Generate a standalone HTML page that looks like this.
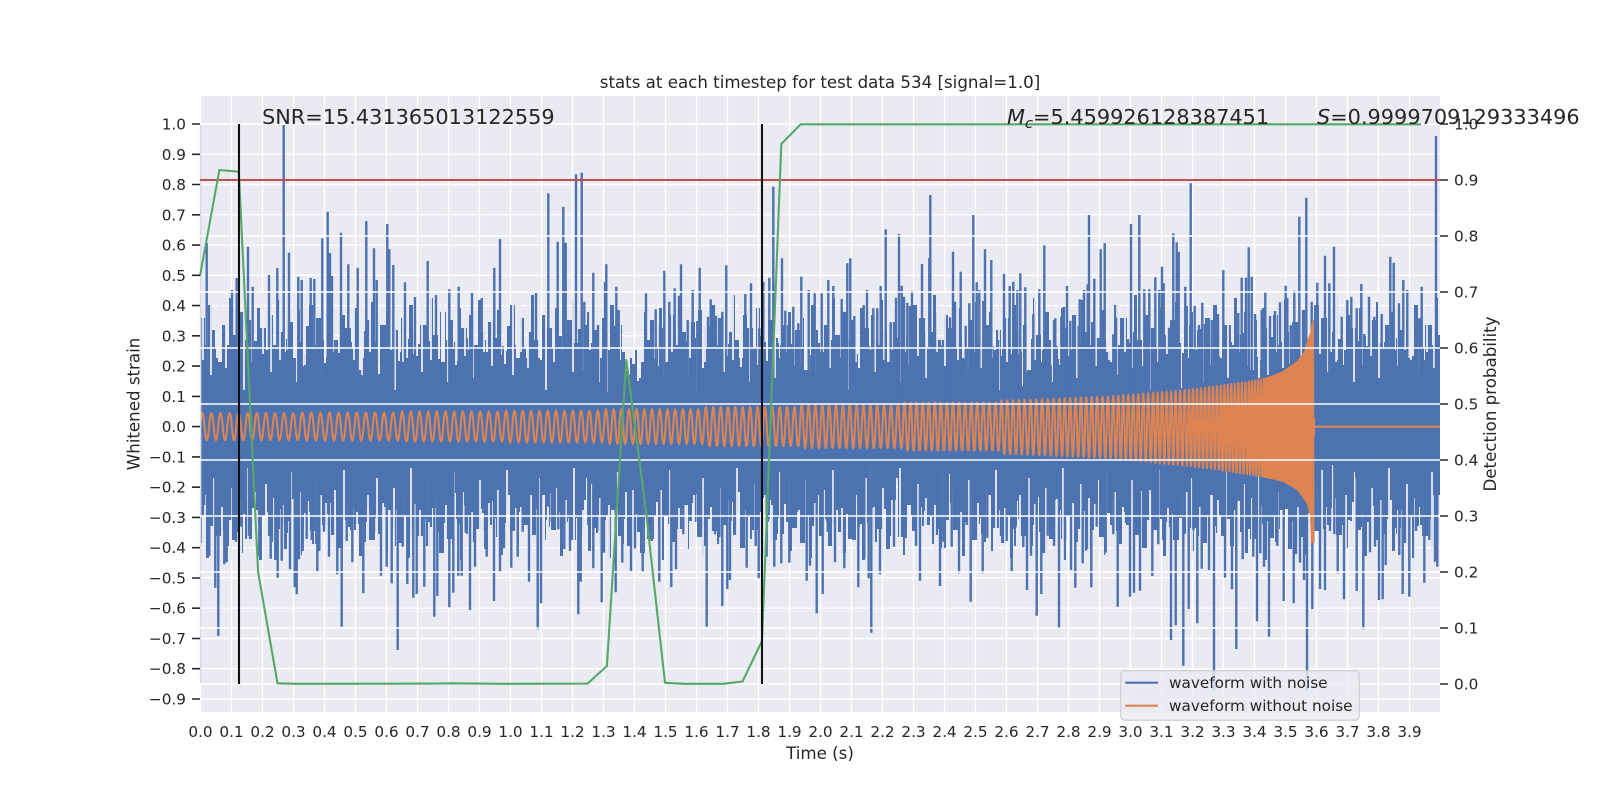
<!DOCTYPE html>
<html><head><meta charset="utf-8"><title>stats</title>
<style>html,body{margin:0;padding:0;background:#fff}svg{display:block}text{font-family:"DejaVu Sans","Liberation Sans",sans-serif;fill:#262626}</style>
</head><body>
<svg xmlns="http://www.w3.org/2000/svg" width="1600" height="800" viewBox="0 0 1600 800">
<defs><clipPath id="c"><rect x="200" y="96" width="1240" height="616"/></clipPath>
<path id="tt" fill="#4C72B0" d="M0 426V352h2V345h2V345h2V361h2V356h2V340h2V366h2V349h2V358h2V343h2V343h2V363h2V381h2V351h2V347h2V360h2V335h2V335h2V354h2V368h2V342h2V357h2V349h2V364h2V346h2V388h2V353h2V341h2V341h2V359h2V367h2V350h2V344h2V356h2V329h2V329h2V362h2V348h2V372h2V355h2V343h2V365h2V352h2V339h2V358h2V358h2V346h2V361h2V392h2V350h2V342h2V366h2V354h2V347h2V347h2V360h2V333h2V356h2V344h2V369h2V351h2V340h2V363h2V357h2V378h2V349h2V345h2V345h2V362h2V353h2V337h2V337h2V359h2V348h2V366h2V342h2V355h2V384h2V350h2V364h2V344h2V358h2V331h2V352h2V352h2V367h2V346h2V360h2V341h2V374h2V356h2V349h2V363h2V343h2V343h2V354h2V368h2V327h2V347h2V361h2V352h2V386h2V345h2V358h2V339h2V339h2V365h2V350h2V356h2V344h2V362h2V348h2V376h2V355h2V341h2V367h2V353h2V353h2V346h2V359h2V334h2V351h2V364h2V343h2V357h2V390h2V349h2V342h2V361h2V361h2V347h2V366h2V354h2V338h2V358h2V345h2V369h2V350h2V363h2V380h2V344h2V356h2V340h2V352h2V352h2V365h2V348h2V360h2V342h2V372h2V355h2V346h2V364h2V351h2V343h2V426Z"/>
<path id="tb" fill="#4C72B0" d="M0 426V507h2V498h2V498h2V521h2V512h2V491h2V526h2V503h2V516h2V495h2V495h2V530h2V470h2V509h2V501h2V519h2V540h2V540h2V506h2V527h2V493h2V514h2V502h2V523h2V497h2V466h2V508h2V492h2V492h2V518h2V528h2V504h2V496h2V512h2V536h2V536h2V522h2V500h2V478h2V510h2V494h2V525h2V507h2V533h2V515h2V515h2V499h2V520h2V462h2V505h2V493h2V526h2V511h2V501h2V501h2V517h2V544h2V513h2V497h2V529h2V506h2V490h2V523h2V514h2V474h2V503h2V498h2V498h2V521h2V508h2V538h2V538h2V516h2V502h2V527h2V495h2V511h2V468h2V505h2V524h2V496h2V515h2V542h2V507h2V507h2V528h2V499h2V518h2V492h2V476h2V512h2V503h2V522h2V494h2V494h2V509h2V529h2V546h2V501h2V519h2V507h2V464h2V498h2V515h2V535h2V535h2V525h2V504h2V512h2V497h2V521h2V502h2V472h2V510h2V492h2V527h2V508h2V508h2V499h2V517h2V539h2V506h2V523h2V495h2V514h2V460h2V503h2V493h2V519h2V519h2V500h2V526h2V511h2V534h2V515h2V498h2V530h2V504h2V522h2V480h2V496h2V513h2V491h2V507h2V507h2V525h2V501h2V518h2V494h2V478h2V510h2V499h2V523h2V505h2V495h2V426Z"/>
<path id="ct" fill="#4C72B0" d="M0 426V318h5V426h3V305h4V330h3V426h4V325h7V345h3V298h3V335h5V426h2V312h6V340h3V320h4V426h5V308h3V328h6V350h2V315h5V345h4V300h3V332h4V426h3V322h6V338h3V310h4V426h6V326h3V305h5V345h2V318h7V426h4V332h3V295h3V340h5V426h3V315h4V328h6V348h3V308h4V336h3V426h5V320h5V302h2V343h4V426h3V325h6V312h3V350h4V330h5V426h3V426Z"/>
<path id="cb" fill="#4C72B0" d="M0 426V535h4V426h3V548h5V520h3V426h4V530h6V512h3V556h3V522h5V426h2V540h6V518h3V534h4V426h5V551h3V528h6V510h2V543h5V515h4V558h3V526h4V426h3V536h6V519h3V546h4V426h6V532h3V553h5V514h2V539h7V426h4V524h3V560h3V516h5V426h3V542h4V529h6V509h3V549h4V521h3V426h5V537h5V555h2V513h4V426h3V531h6V544h3V507h4V525h5V426h3V426Z"/>
<path id="g1" fill="none" stroke="#EAEAF2" stroke-width="1.8" d="M3 360V292M11 375V292M19 352V292M26 368V292M37 358V292M44 390V292M52 362V292M63 354V292M71 372V292M80 360V292M88 350V292M97 382V292M105 365V292M114 356V292M122 378V292M133 352V292M141 366V292"/>
<path id="g2" fill="none" stroke="#EAEAF2" stroke-width="1.8" d="M5 495V560M14 478V560M22 507V560M31 488V560M40 500V560M48 468V560M57 510V560M66 484V560M74 498V560M83 505V560M91 472V560M100 492V560M109 512V560M117 480V560M126 503V560M135 490V560M144 470V560M153 508V560"/>
<path id="g3" fill="none" stroke="#EAEAF2" stroke-width="4" d="M20 362V292M95 358V292M160 370V292M40 505V560M120 495V560M190 510V560"/>
</defs>
<rect width="1600" height="800" fill="#fff"/>
<rect x="200" y="96" width="1240" height="616" fill="#EAEAF2"/>
<path fill="none" stroke="#fff" stroke-width="1.39" d="M200 124H1440M200 154.3H1440M200 184.5H1440M200 214.8H1440M200 245.1H1440M200 275.3H1440M200 305.6H1440M200 335.8H1440M200 366.1H1440M200 396.4H1440M200 426.6H1440M200 456.9H1440M200 487.2H1440M200 517.4H1440M200 547.7H1440M200 578H1440M200 608.2H1440M200 638.5H1440M200 668.7H1440M200 699H1440M200.5 96V712M231.5 96V712M262.5 96V712M293.5 96V712M324.5 96V712M355.5 96V712M386.5 96V712M417.5 96V712M448.5 96V712M479.5 96V712M510.5 96V712M541.5 96V712M572.5 96V712M603.5 96V712M634.5 96V712M665.5 96V712M696.5 96V712M727.5 96V712M758.5 96V712M789.5 96V712M820.5 96V712M851.5 96V712M882.5 96V712M913.5 96V712M944.5 96V712M975.5 96V712M1006.5 96V712M1037.5 96V712M1068.5 96V712M1099.5 96V712M1130.5 96V712M1161.5 96V712M1192.5 96V712M1223.5 96V712M1254.5 96V712M1285.5 96V712M1316.5 96V712M1347.5 96V712M1378.5 96V712M1409.5 96V712"/>
<g clip-path="url(#c)">
<use href="#tt" transform="translate(200 0)"/><use href="#tt" transform="translate(510 0)"/><use href="#tt" transform="translate(820 0)"/><use href="#tt" transform="translate(1130 0)"/>
<use href="#tb" transform="translate(200 0)"/><use href="#tb" transform="translate(510 0)"/><use href="#tb" transform="translate(820 0)"/><use href="#tb" transform="translate(1130 0)"/>
<use href="#ct" transform="translate(200 0)"/><use href="#ct" transform="translate(401 0)"/><use href="#ct" transform="translate(602 0)"/><use href="#ct" transform="translate(803 0)"/><use href="#ct" transform="translate(1004 0)"/><use href="#ct" transform="translate(1205 0)"/><use href="#ct" transform="translate(1406 0)"/>
<use href="#cb" transform="translate(130 0)"/><use href="#cb" transform="translate(331 0)"/><use href="#cb" transform="translate(532 0)"/><use href="#cb" transform="translate(733 0)"/><use href="#cb" transform="translate(934 0)"/><use href="#cb" transform="translate(1135 0)"/><use href="#cb" transform="translate(1336 0)"/>
<rect x="200" y="395" width="1240" height="70" fill="#4C72B0"/>
<use href="#g1" transform="translate(200 0)"/><use href="#g1" transform="translate(351 0)"/><use href="#g1" transform="translate(502 0)"/><use href="#g1" transform="translate(653 0)"/><use href="#g1" transform="translate(804 0)"/><use href="#g1" transform="translate(955 0)"/><use href="#g1" transform="translate(1106 0)"/><use href="#g1" transform="translate(1257 0)"/><use href="#g1" transform="translate(1408 0)"/>
<use href="#g2" transform="translate(200 0)"/><use href="#g2" transform="translate(363 0)"/><use href="#g2" transform="translate(526 0)"/><use href="#g2" transform="translate(689 0)"/><use href="#g2" transform="translate(852 0)"/><use href="#g2" transform="translate(1015 0)"/><use href="#g2" transform="translate(1178 0)"/><use href="#g2" transform="translate(1341 0)"/>
<use href="#g3" transform="translate(200 0)"/><use href="#g3" transform="translate(423 0)"/><use href="#g3" transform="translate(646 0)"/><use href="#g3" transform="translate(869 0)"/><use href="#g3" transform="translate(1092 0)"/><use href="#g3" transform="translate(1315 0)"/>
<rect x="622" y="290" width="22" height="95" fill="#EAEAF2"/>
<path d="M622 305.6H644M622 335.8H644M622 366.1H644M634.5 290V385" stroke="#fff" stroke-width="1.39" fill="none"/>
<path fill="#4C72B0" d="M622 396V352h3V368h3V375h2V358h2V364h3V350h2V381h2V378h2V362h3V396Z"/>
<path id="blue" fill="none" stroke="#4C72B0" stroke-width="2.4" d="M206.7 243V400M232 290V400M236.7 278V400M248 246.7V400M252.7 286.7V400M269 275V400M277.3 268V400M283.7 125V400M289 252.7V400M298.3 276.7V400M301.7 280V400M310.7 278V400M314.3 279V400M322.3 238.3V400M327.7 211.7V400M330 253V400M332 276V400M341 232.7V400M348.3 264.3V400M357.7 267.7V400M366.3 221V400M374 248.3V400M376.7 280V400M387.3 224V400M389.3 249.3V400M393.3 265V400M405 282.3V400M415 297V400M427.7 261V400M436 295V400M449.3 289.3V400M458.7 286.7V400M472 293V400M481.7 298V400M494.3 267.7V400M500 239V400M536 293V400M548.3 193.3V400M557.7 241.7V400M563.3 206.7V400M565.7 242.7V400M576 174.3V400M581.7 172.7V400M584.3 301.7V400M586 330V400M593.3 272.7V400M598 325V400M605 281.7V400M606.3 264.3V400M616.3 286.7V400M618.7 310V400M614 325.7V400M646 293.3V400M651.3 369V400M655.7 309.3V400M660 326V400M664.3 270.7V400M669.3 301.7V400M674.7 288.3V400M679 295.7V400M681 264.3V400M687.7 320V400M692.7 290V400M697.3 321V400M699.7 267.7V400M708 316.7V400M710.7 299.3V400M716 315.7V400M722.3 311.7V400M726.3 265.3V400M745.3 294V400M751 283.3V400M759.3 328.3V400M763.3 281.7V400M769.3 277.7V400M773.3 186.7V400M782 258.3V400M785.3 310.7V400M793.3 306.7V400M798.3 323.3V400M801.3 276.7V400M808.7 290V400M814.7 293.3V400M821.7 293.3V400M828.3 280V400M833.3 286V400M841.7 299V400M847.3 263.3V400M850.3 258.3V400M854.3 316V400M863.7 305V400M867 290V400M873.3 308.3V400M877.3 308.3V400M880.7 286V400M885.7 229.3V400M890.7 322.3V400M896 297.7V400M899 234V400M901.7 285.7V400M904 296.7V400M907.3 302.7V400M910 306V400M912 290.7V400M914.7 308.3V400M922 264V400M924 333V400M929.3 258V400M930.3 195V400M935 312.7V400M942.3 345V400M950 317.3V400M953 251.7V400M955 301.7V400M960.7 271.7V400M965.7 325.7V400M969.3 303.3V400M973.3 215V400M976.7 282.3V400M979.3 290V400M983.3 301V400M985 249.3V400M987.7 331V400M991.3 260V400M998 340V400M1004 274V400M1009.7 286V400M1013.3 281.7V400M1017.3 290V400M1020.3 273.3V400M1025.3 287.3V400M1033.3 314V400M1039.3 289.3V400M1044.3 245.3V400M1050.7 365.7V400M1055.3 318.3V400M1061.3 316.7V400M1064 306.7V400M1067 286V400M1070.3 320.7V400M1078.7 325.7V400M1079.7 299.3V400M1084 290V400M1087.7 284.3V400M1089 215V400M1094.3 278.7V400M1100.7 249.3V400M1104.7 243.3V400M1113.3 334.3V400M1116 317.7V400M1120.7 345.7V400M1128 339.3V400M1131 224V400M1134.3 335V400M1139.3 215V400M1144.3 289.3V400M1149.3 289.3V400M1155.3 277.3V400M1159.3 290V400M1162 266.7V400M1163.7 283.3V400M1169 327.7V400M1173.3 233.3V400M1176.7 242.3V400M1178.7 251.7V400M1185.3 286.7V400M1186.7 306V400M1190.7 183.3V400M1194.7 306V400M1199 325V400M1202.3 302.7V400M1205 324V400M1211.7 320V400M1214.3 325.7V400M1218 314V400M1223.3 270V400M1238.3 313V400M1241.7 277.7V400M1246 277.7V400M1248.7 247.3V400M1251.7 276.7V400M1255 314V400M1261.7 310V400M1265.3 292.3V400M1270 316V400M1275 311V400M1280 302.3V400M1285.7 285.7V400M1287.3 298V400M1290.7 325.3V400M1294.3 290.7V400M1299.3 216.7V400M1303.3 311.7V400M1306.3 197.7V400M1311.7 301.7V400M1317.3 282.7V400M1325 255.7V400M1329.3 283.3V400M1334 246.7V400M1341.7 316.7V400M1347.3 300V400M1351.3 296.7V400M1356.7 308.3V400M1361.3 284V400M1364.3 334V400M1369 296.7V400M1374.3 316.7V400M1381.7 314V400M1390.3 256.7V400M1393.7 262.7V400M1399 303.3V400M1403.3 280V400M1407.3 290V400M1419.3 318.3V400M1421.7 286.7V400M1436 136V400
M204 450V505M209.3 450V556M215.3 450V587.7M218.3 450V636M224.3 450V564.3M226.7 450V562.3M230 450V520M236 450V541.7M241.3 450V526.7M249 450V535.7M259.3 450V556M270.7 450V558.7M275.3 450V560M277.7 450V577.7M281.7 450V560.7M285 450V525.7M290 450V569.3M294.7 450V587.3M296.7 450V594.3M299 450V559.3M302.7 450V551M306.7 450V539M311.7 450V540M317.3 450V571M319.3 450V551M324 450V531.7M329 450V556.7M337.3 450V574.3M341.7 450V626.7M346.7 450V541M352.3 450V562.3M355 450V524M363.3 450V593.3M374 450V533.3M381 450V575.7M386.7 450V566.7M391.7 450V583.3M397.7 450V650M402.7 450V546.7M407.3 450V584M413.3 450V597.7M416.7 450V594M424.3 450V586.7M429.3 450V522M434.3 450V616.7M437.3 450V596M449.3 450V607.3M453.3 450V592.7M458.3 450V575.7M461.7 450V575.7M465.7 450V532.7M470 450V610M475 450V566.7M485 450V530M486.7 450V556.7M494 450V601M500 450V571.7M504 450V548.3M511.3 450V567.7M517.7 450V556.7M522.7 450V531.7M529 450V581.7M537.7 450V629.3M541 450V603.3M551.7 450V521.7M554.3 450V530M558.3 450V529.3M564.3 450V549M570 450V551M578.3 450V614.3M580.7 450V581.7M588.3 450V525M593.3 450V568.3M597.3 450V530.7M601.7 450V602.3M604 450V552.7M615.7 450V592.3M622.3 450V562.7M631 450V571M635 450V548.3M642.7 450V572.3M651.7 450V541M659.3 450V581.7M671.3 450V587.3M676 450V569.3M683.3 450V534.3M697.7 450V521.7M701 450V529M706.7 450V626.7M715 450V534.3M719.3 450V537.3M722.3 450V606M727.3 450V589M730 450V580M746.7 450V567.7M755.7 450V546M758.7 450V578.3M766.7 450V556.7M774.3 450V566.7M781.3 450V563.3M789.3 450V562.7M801.7 450V526.7M806.7 450V580.7M810 450V565.7M816.7 450V613.3M822.7 450V594M827.7 450V531.7M835 450V562.3M844.3 450V568.3M851.7 450V525M858.3 450V587.3M864.3 450V558.3M868.7 450V578.3M871.3 450V632.7M880 450V574.3M888.3 450V544M894 450V546.7M905.7 450V538.3M916 450V546M920 450V580.7M940 450V586M943.3 450V541.7M951.7 450V546.7M959 450V573.3M966.7 450V525M970.7 450V601.7M975.7 450V539.3M982.7 450V573.3M987.3 450V537.7M1001 450V536M1006.7 450V541M1011.7 450V571M1015.3 450V528M1023.3 450V547.3M1027 450V590M1031 450V555.7M1036.7 450V615.7M1041.3 450V594M1047.7 450V535.7M1054 450V546M1059 450V629M1065 450V541.7M1071 450V570M1075.3 450V587.7M1082.7 450V563.3M1086 450V550.7M1091.3 450V587.3M1096.7 450V526.7M1101.7 450V521.7M1105.7 450V552.7M1113.3 450V534.3M1117.7 450V606.7M1130 450V596.7M1134 450V592.7M1140 450V590.7M1145.3 450V535.7M1152.3 450V576M1158.3 450V544.3M1165 450V540M1171 450V640M1175.7 450V625.3M1183.3 450V665.7M1188.7 450V609M1193.3 450V530M1197.3 450V623.3M1201.7 450V568.7M1209 450V570M1214 450V690M1225 450V577.7M1232 450V589.3M1236.3 450V649M1242.7 450V559.3M1249.3 450V527.3M1253.3 450V556.7M1257 450V621.3M1260.3 450V553.3M1264 450V566.7M1269 450V636.7M1277.3 450V546M1283.7 450V601M1293.7 450V603.3M1296 450V554.3M1300 450V562.7M1304 450V580M1307 450V690M1312.3 450V609M1320 450V589M1325 450V590M1330 450V531M1334.3 450V534.3M1337.7 450V573.3M1344 450V599.3M1356.7 450V591M1363.3 450V629.3M1370 450V552.3M1375 450V546.7M1379 450V600M1382.7 450V599.3M1385.7 450V565M1395 450V525M1399.3 450V555M1402.7 450V594M1409.3 450V596.7M1416 450V531M1424.3 450V582.7M1429.3 450V540M1435 450V561.7M1437.3 450V566.7"/>
<path id="orange" fill="none" stroke="#DD8452" stroke-width="2.08" stroke-linejoin="round" d="M200 426.6q2.27-27 4.545 0t
4.545 0 4.545 0 4.545 0 4.545 0 4.545 0
4.545 0 4.545 0 4.545 0 4.545 0 4.545 0
4.545 0 4.545 0 4.545 0 4.545 0 4.545 0
4.545 0 4.545 0 4.545 0 4.545 0 4.545 0
4.545 0
M300 426.6q2.27-28 4.545 0t
4.545 0 4.545 0 4.545 0 4.545 0 4.545 0
4.545 0 4.545 0 4.545 0 4.545 0 4.545 0
4.545 0 4.545 0 4.545 0 4.545 0 4.545 0
4.545 0 4.545 0 4.545 0 4.545 0 4.545 0
4.545 0
M400 426.6q2.17-30 4.333 0t
4.333 0 4.333 0 4.333 0 4.333 0 4.333 0
4.333 0 4.333 0 4.333 0 4.333 0 4.333 0
4.333 0 4.333 0 4.333 0 4.333 0 4.333 0
4.333 0 4.333 0 4.333 0 4.333 0 4.333 0
4.333 0 4.333 0 4.333 0
M504 426.6q2.08-32 4.167 0t
4.167 0 4.167 0 4.167 0 4.167 0 4.167 0
4.167 0 4.167 0 4.167 0 4.167 0 4.167 0
4.167 0 4.167 0 4.167 0 4.167 0 4.167 0
4.167 0 4.167 0 4.167 0 4.167 0 4.167 0
4.167 0 4.167 0 4.167 0
M604 426.6q1.92-35 3.846 0t
3.846 0 3.846 0 3.846 0 3.846 0 3.846 0
3.846 0 3.846 0 3.846 0 3.846 0 3.846 0
3.846 0 3.846 0 3.846 0 3.846 0 3.846 0
3.846 0 3.846 0 3.846 0 3.846 0 3.846 0
3.846 0 3.846 0 3.846 0 3.846 0 3.846 0
M704 426.6q1.85-39 3.692 0t
3.692 0 3.692 0 3.692 0 3.692 0 3.692 0
3.692 0 3.692 0 3.692 0 3.692 0 3.692 0
3.692 0 3.692 0 3.692 0 3.692 0 3.692 0
3.692 0 3.692 0 3.692 0 3.692 0 3.692 0
3.692 0 3.692 0 3.692 0 3.692 0 3.692 0
M800 426.6q1.72-43 3.433 0t
3.433 0 3.433 0 3.433 0 3.433 0 3.433 0
3.433 0 3.433 0 3.433 0 3.433 0 3.433 0
3.433 0 3.433 0 3.433 0 3.433 0 3.433 0
3.433 0 3.433 0 3.433 0 3.433 0 3.433 0
3.433 0 3.433 0 3.433 0 3.433 0 3.433 0
3.433 0 3.433 0 3.433 0 3.433 0
M903 426.6q1.52-48 3.03 0t
3.03 0 3.03 0 3.03 0 3.03 0 3.03 0
3.03 0 3.03 0 3.03 0 3.03 0 3.03 0
3.03 0 3.03 0 3.03 0 3.03 0 3.03 0
3.03 0 3.03 0 3.03 0 3.03 0 3.03 0
3.03 0 3.03 0 3.03 0 3.03 0 3.03 0
3.03 0 3.03 0 3.03 0 3.03 0 3.03 0
3.03 0
M1000 426.6q1.45-52 2.9 0q1.45 55 2.9 0q1.45-52.4 2.9 0q1.45 55.4 2.9 0q1.45-52.8 2.9 0q1.45 55.8 2.9 0q1.45-53.2 2.9 0q1.45 56.2 2.9 0q1.45-53.6 2.9 0q1.45 56.6 2.9 0q1.45-54 2.9 0q1.45 57 2.9 0q1.45-54.4 2.9 0q1.45 57.4 2.9 0q1.45-54.8 2.9 0q1.45 57.8 2.9 0q1.45-55.2 2.9 0q1.45 58.2 2.9 0q1.45-55.6 2.9 0q1.45 58.6 2.9 0
q1.35-56 2.7 0q1.35 59 2.7 0q1.35-56.5 2.7 0q1.35 59.5 2.7 0q1.35-57 2.7 0q1.35 60 2.7 0q1.35-57.5 2.7 0q1.35 60.5 2.7 0q1.35-58 2.7 0q1.35 61 2.7 0q1.35-58.5 2.7 0q1.35 61.5 2.7 0q1.35-59 2.7 0q1.35 62 2.7 0q1.35-59.5 2.7 0q1.35 62.5 2.7 0q1.35-60 2.7 0q1.35 63 2.7 0q1.35-60.5 2.7 0q1.35 63.5 2.7 0
q1.25-61 2.5 0q1.25 65 2.5 0q1.25-62 2.5 0q1.25 66 2.5 0q1.25-63 2.5 0q1.25 67 2.5 0q1.25-63.5 2.5 0q1.25 67.5 2.5 0q1.25-64.5 2.5 0q1.25 68.5 2.5 0q1.25-65.5 2.5 0q1.25 69.5 2.5 0q1.25-66 2.5 0q1.25 70 2.5 0q1.25-67 2.5 0q1.25 71 2.5 0
q1.12-68 2.25 0q1.12 73 2.25 0q1.12-68.5 2.25 0q1.12 73.5 2.25 0q1.12-69.5 2.25 0q1.12 74.5 2.25 0q1.12-70 2.25 0q1.12 75 2.25 0q1.12-71 2.25 0q1.12 76 2.25 0q1.12-71.5 2.25 0q1.12 76.5 2.25 0q1.12-72.5 2.25 0q1.12 77.5 2.25 0q1.12-73 2.25 0q1.12 78 2.25 0
q1-74 2 0q1 79 2 0q1-75 2 0q1 80 2 0q1-76 2 0q1 81 2 0q1-77 2 0q1 82 2 0q1-78 2 0q1 83 2 0q1-79 2 0q1 84 2 0q1-80 2 0q1 85 2 0q1-81 2 0q1 86 2 0
q.87-82 1.75 0q.87 88 1.75 0q.87-83 1.75 0q.87 89 1.75 0q.87-84 1.75 0q.87 90 1.75 0q.87-85 1.75 0q.87 91 1.75 0q.87-86 1.75 0q.87 92 1.75 0q.87-87 1.75 0q.87 93 1.75 0q.87-88 1.75 0q.87 94 1.75 0q.87-89 1.75 0q.87 95 1.75 0
q.75-90 1.5 0q.75 96 1.5 0q.75-91 1.5 0q.75 97 1.5 0q.75-92 1.5 0q.75 98 1.5 0q.75-93 1.5 0q.75 99 1.5 0q.75-94 1.5 0q.75 100 1.5 0q.75-95 1.5 0q.75 101 1.5 0
M1314 418V437M1314 426.7H1440"/>
<path fill="#DD8452" d="M1263 379L1283 371L1297 361L1304 352L1307 342L1310 333L1312 322L1314 319L1314.5 543L1311 543L1310 516L1307 504L1297 490L1283 482L1263 477Z"/>
</g>
<path d="M200.6 124V684" stroke="#d9d9e2" stroke-width="1.6" fill="none"/>
<path fill="none" stroke="#fff" stroke-width="1.39" d="M200 124H1440M200 180H1440M200 236H1440M200 292H1440M200 348H1440M200 404H1440M200 460H1440M200 516H1440M200 572H1440M200 628H1440M200 684H1440"/>
<path d="M200 180H1440" stroke="#C44E52" stroke-width="2.08" fill="none"/>
<path id="green" fill="none" stroke="#55A868" stroke-width="2.08" stroke-linejoin="round" d="M200 276L219.4 170L238.8 171.7L258.1 572L277.5 683.3L296.9 683.8L432 683.6L455 683.3L500 683.8L587.5 683.6L606.9 666L626.3 360L645.6 508L665 682.8L684.4 683.8L723 683.8L742.5 681.5L762 641L781.3 144L800.6 124.3L1421 124.3"/>
<path d="M239 124V684M762 124V684" stroke="#111" stroke-width="2.08" fill="none"/>
<path fill="none" stroke="#262626" stroke-width="1.6" d="M192 124H200M192 154.3H200M192 184.5H200M192 214.8H200M192 245.1H200M192 275.3H200M192 305.6H200M192 335.8H200M192 366.1H200M192 396.4H200M192 426.6H200M192 456.9H200M192 487.2H200M192 517.4H200M192 547.7H200M192 578H200M192 608.2H200M192 638.5H200M192 668.7H200M192 699H200M1440 124H1448M1440 180H1448M1440 236H1448M1440 292H1448M1440 348H1448M1440 404H1448M1440 460H1448M1440 516H1448M1440 572H1448M1440 628H1448M1440 684H1448"/>
<text x="820" y="88" font-size="16.67" text-anchor="middle">stats at each timestep for test data 534 [signal=1.0]</text>
<text x="262" y="124" font-size="20.83">SNR=15.431365013122559</text>
<text x="1007" y="124" font-size="20.83"><tspan font-style="italic">M</tspan><tspan font-style="italic" font-size="14.6" dy="4">c</tspan><tspan dy="-4">=5.459926128387451</tspan></text>
<text x="1317" y="124" font-size="20.83"><tspan font-style="italic">S</tspan>=0.9999709129333496</text>
<g font-size="15.28" text-anchor="end">
<text x="186" y="129.5">1.0</text><text x="186" y="159.8">0.9</text><text x="186" y="190">0.8</text><text x="186" y="220.3">0.7</text><text x="186" y="250.6">0.6</text><text x="186" y="280.8">0.5</text><text x="186" y="311.1">0.4</text><text x="186" y="341.3">0.3</text><text x="186" y="371.6">0.2</text><text x="186" y="401.9">0.1</text><text x="186" y="432.1">0.0</text><text x="186" y="462.4">−0.1</text><text x="186" y="492.7">−0.2</text><text x="186" y="522.9">−0.3</text><text x="186" y="553.2">−0.4</text><text x="186" y="583.5">−0.5</text><text x="186" y="613.7">−0.6</text><text x="186" y="644">−0.7</text><text x="186" y="674.2">−0.8</text><text x="186" y="704.5">−0.9</text>
</g>
<g font-size="15.28">
<text x="1454" y="129.5">1.0</text><text x="1454" y="185.5">0.9</text><text x="1454" y="241.5">0.8</text><text x="1454" y="297.5">0.7</text><text x="1454" y="353.5">0.6</text><text x="1454" y="409.5">0.5</text><text x="1454" y="465.5">0.4</text><text x="1454" y="521.5">0.3</text><text x="1454" y="577.5">0.2</text><text x="1454" y="633.5">0.1</text><text x="1454" y="689.5">0.0</text>
</g>
<g font-size="15.28" text-anchor="middle">
<text x="200.5" y="737">0.0</text><text x="231.5" y="737">0.1</text><text x="262.5" y="737">0.2</text><text x="293.5" y="737">0.3</text><text x="324.5" y="737">0.4</text><text x="355.5" y="737">0.5</text><text x="386.5" y="737">0.6</text><text x="417.5" y="737">0.7</text><text x="448.5" y="737">0.8</text><text x="479.5" y="737">0.9</text><text x="510.5" y="737">1.0</text><text x="541.5" y="737">1.1</text><text x="572.5" y="737">1.2</text><text x="603.5" y="737">1.3</text><text x="634.5" y="737">1.4</text><text x="665.5" y="737">1.5</text><text x="696.5" y="737">1.6</text><text x="727.5" y="737">1.7</text><text x="758.5" y="737">1.8</text><text x="789.5" y="737">1.9</text><text x="820.5" y="737">2.0</text><text x="851.5" y="737">2.1</text><text x="882.5" y="737">2.2</text><text x="913.5" y="737">2.3</text><text x="944.5" y="737">2.4</text><text x="975.5" y="737">2.5</text><text x="1006.5" y="737">2.6</text><text x="1037.5" y="737">2.7</text><text x="1068.5" y="737">2.8</text><text x="1099.5" y="737">2.9</text><text x="1130.5" y="737">3.0</text><text x="1161.5" y="737">3.1</text><text x="1192.5" y="737">3.2</text><text x="1223.5" y="737">3.3</text><text x="1254.5" y="737">3.4</text><text x="1285.5" y="737">3.5</text><text x="1316.5" y="737">3.6</text><text x="1347.5" y="737">3.7</text><text x="1378.5" y="737">3.8</text><text x="1409.5" y="737">3.9</text>
</g>
<text x="820" y="759" font-size="16.67" text-anchor="middle">Time (s)</text>
<text transform="translate(139.5 404) rotate(-90)" font-size="16.67" text-anchor="middle">Whitened strain</text>
<text transform="translate(1496 404) rotate(-90)" font-size="16.67" text-anchor="middle">Detection probability</text>
<rect x="1120.7" y="670.7" width="238.6" height="49.6" rx="4" fill="#EAEAF2" fill-opacity=".8" stroke="#cccccc" stroke-opacity=".8" stroke-width="1.39"/>
<path d="M1125.3 682.7H1158" stroke="#4C72B0" stroke-width="2.08"/>
<path d="M1125.3 705.7H1158" stroke="#DD8452" stroke-width="2.08"/>
<text x="1169" y="688" font-size="15.28">waveform with noise</text>
<text x="1169" y="711" font-size="15.28">waveform without noise</text>
</svg>
</body></html>
